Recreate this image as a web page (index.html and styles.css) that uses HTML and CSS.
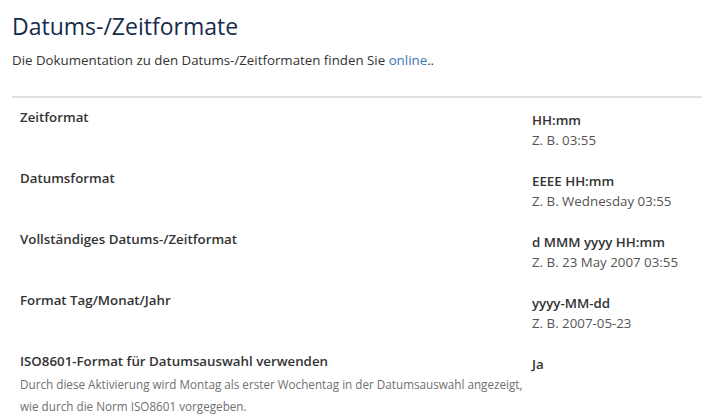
FILE: index.html
```html
<!DOCTYPE html>
<html lang="de">
<head>
<meta charset="UTF-8">
<meta name="viewport" content="width=device-width, initial-scale=1.0">
<title>Datums-/Zeitformate</title>
<link rel="stylesheet" href="styles.css">
</head>
<body>
  <div class="page">
    <h1>Datums-/Zeitformate</h1>
    <p class="intro">Die Dokumentation zu den Datums-/Zeitformaten finden Sie <a href="#">online</a>..</p>

    <div class="formats">
      <div class="row">
        <div class="label">Zeitformat</div>
        <div class="value">
          <strong>HH:mm</strong>
          <span>Z. B. 03:55</span>
        </div>
      </div>
      <div class="row">
        <div class="label">Datumsformat</div>
        <div class="value">
          <strong>EEEE HH:mm</strong>
          <span>Z. B. Wednesday 03:55</span>
        </div>
      </div>
      <div class="row">
        <div class="label">Vollständiges Datums-/Zeitformat</div>
        <div class="value">
          <strong>d MMM yyyy HH:mm</strong>
          <span>Z. B. 23 May 2007 03:55</span>
        </div>
      </div>
      <div class="row">
        <div class="label">Format Tag/Monat/Jahr</div>
        <div class="value">
          <strong>yyyy-MM-dd</strong>
          <span>Z. B. 2007-05-23</span>
        </div>
      </div>
      <div class="row">
        <div class="label">
          ISO8601-Format für Datumsauswahl verwenden
          <p class="hint">Durch diese Aktivierung wird Montag als erster Wochentag in der Datumsauswahl angezeigt, wie durch die Norm ISO8601 vorgegeben.</p>
        </div>
        <div class="value">
          <strong>Ja</strong>
        </div>
      </div>
    </div>
  </div>
</body>
</html>
```

FILE: styles.css
```css
body {
  margin: 0;
  font-family: "Open Sans", "Noto Sans", sans-serif;
  font-size: 13.3px;
  color: #333333;
  background: #ffffff;
}

.page {
  padding: 8px 0 0 12px;
}

h1 {
  margin: 0;
  font-size: 23px;
  font-weight: 500;
  line-height: 36px;
  color: #172b4d;
}

.intro {
  margin: 6px 0 0;
  line-height: 20px;
  color: #333333;
}

.intro a {
  color: #3b73af;
  text-decoration: none;
}

.formats {
  margin-top: 26px;
  border-top: 2px solid #dfe1e6;
}

.row {
  display: grid;
  grid-template-columns: 1fr 170px;
  padding: 9px 0 9px 8px;
}

.label {
  font-weight: 600;
  line-height: 20px;
  color: #333333;
}

.value {
  display: flex;
  flex-direction: column;
  padding-top: 3px;
  line-height: 20px;
}

.value strong {
  font-weight: 600;
  color: #333333;
}

.value span {
  color: #555555;
}

.hint {
  max-width: 510px;
  margin: 2px 0 0;
  font-size: 11.7px;
  font-weight: 400;
  line-height: 22px;
  color: #707070;
}
```
